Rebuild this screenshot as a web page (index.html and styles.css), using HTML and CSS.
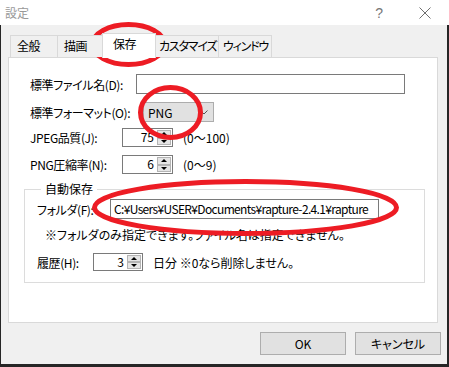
FILE: index.html
```html
<!DOCTYPE html>
<html lang="ja">
<head>
    <meta charset="UTF-8">
    <title>設定</title>
    <link rel="stylesheet" href="styles.css">
</head>
<body>

<div class="titlebar">
    <span class="title">設定</span>
    <span class="help">?</span>
    <svg class="close" width="12" height="12" viewBox="0 0 12 12">
        <path d="M0.5 0.5 L11.5 11.5 M11.5 0.5 L0.5 11.5" stroke="#6f6f6f" stroke-width="1" fill="none"/>
    </svg>
</div>

<div class="client">
    <div class="tabs">
        <div class="tab w1">全般</div>
        <div class="tab w2">描画</div>
        <div class="tab selected">保存</div>
        <div class="tab w4">カスタマイズ</div>
        <div class="tab w5">ウィンドウ</div>
    </div>

    <div class="panel">
        <div class="row r1">
            <label class="lbl l1">標準ファイル名(D):</label>
            <div class="textbox tb1"></div>
        </div>
        <div class="row r2">
            <label class="lbl l2">標準フォーマット(O):</label>
            <div class="combo">
                <span>PNG</span>
                <svg width="8" height="5" viewBox="0 0 8 5"><polyline points="0.5,0.5 4,4 7.5,0.5" fill="none" stroke="#555" stroke-width="1"/></svg>
            </div>
        </div>
        <div class="row r3">
            <label class="lbl l3">JPEG品質(J):</label>
            <div class="spin w51">
                <span class="val">75</span>
                <span class="btns"><span class="up"></span><span class="down"></span></span>
            </div>
            <span class="range">(0〜100)</span>
        </div>
        <div class="row r4">
            <label class="lbl l3">PNG圧縮率(N):</label>
            <div class="spin w51">
                <span class="val">6</span>
                <span class="btns"><span class="up"></span><span class="down"></span></span>
            </div>
            <span class="range">(0〜9)</span>
        </div>

        <fieldset class="group">
            <legend>自動保存</legend>
            <div class="row r5">
                <label class="lbl l5">フォルダ(F):</label>
                <div class="textbox tb2">C:¥Users¥USER¥Documents¥rapture-2.4.1¥rapture</div>
            </div>
            <div class="note">※フォルダのみ指定できます。ファイル名は指定できません。</div>
            <div class="row r7">
                <label class="lbl l7">履歴(H):</label>
                <div class="spin w50">
                    <span class="val">3</span>
                    <span class="btns"><span class="up"></span><span class="down"></span></span>
                </div>
                <span class="range">日分 ※0なら削除しません。</span>
            </div>
        </fieldset>
    </div>

    <div class="buttons">
        <button class="btn">OK</button>
        <button class="btn">キャンセル</button>
    </div>
</div>

<!-- red annotation marks drawn over the dialog -->
<svg class="marks" width="449" height="367" viewBox="0 0 449 367">
    <ellipse cx="128.5" cy="44.5" rx="36" ry="20" fill="none" stroke="#ed1c24" stroke-width="5"/>
    <ellipse cx="170.5" cy="112.5" rx="30" ry="25" fill="none" stroke="#ed1c24" stroke-width="5"/>
    <ellipse cx="245.5" cy="207.5" rx="151" ry="26" fill="none" stroke="#ed1c24" stroke-width="5"/>
</svg>

</body>
</html>
```

FILE: styles.css
```css
* {
    box-sizing: border-box;
}
body {
    margin: 0;
    width: 449px;
    height: 367px;
    overflow: hidden;
    position: relative;
    background: #262626;
    font-family: "Noto Sans CJK JP", "Noto Sans", sans-serif;
    font-size: 12px;
    font-feature-settings: "palt";
    color: #000;
}
.titlebar {
    height: 25px;
    background: #fff;
    display: flex;
    align-items: center;
    padding-left: 5px;
    color: #999;
}
.title {
    flex: 1;
}
.help {
    font-family: "Liberation Sans", sans-serif;
    font-size: 14px;
    color: #777;
    margin-right: 36px;
}
.close {
    margin-right: 18px;
}
.client {
    height: 339px;
    margin: 0 2px 0 1px;
    background: #f0f0f0;
    padding: 8px 0 0 7px;
}
.tabs {
    display: flex;
    align-items: flex-end;
    height: 24px;
    padding-left: 2px;
    position: relative;
    z-index: 1;
}
.tab {
    height: 22px;
    border: 1px solid #d9d9d9;
    border-bottom: none;
    margin-right: -1px;
    padding-left: 6px;
    line-height: 20px;
    background: #f0f0f0;
    white-space: nowrap;
    overflow: hidden;
    letter-spacing: -0.5px;
}
.w1 { width: 48px; }
.w2 { width: 48px; }
.w4 { width: 64px; padding-left: 3px; letter-spacing: -1.2px; }
.w5 { width: 54px; padding-left: 4px; letter-spacing: -1.2px; }
.tab.selected {
    width: 54px;
    height: 25px;
    margin-left: -2px;
    margin-bottom: -1px;
    padding-left: 10px;
    line-height: 20px;
    background: #fff;
    position: relative;
    z-index: 2;
}
.panel {
    width: 430px;
    height: 266px;
    border: 1px solid #d9d9d9;
    background: #fff;
    padding: 16px 0 0 21px;
}
.row {
    display: flex;
    align-items: center;
}
.lbl {
    flex: none;
    white-space: nowrap;
    letter-spacing: -0.4px;
}
.r1 { height: 20px; }
.r2 { height: 20px; margin-top: 8px; }
.r3 { height: 19px; margin-top: 6px; }
.r4 { height: 19px; margin-top: 8px; }
.l1 { width: 106px; }
.l2 { width: 113px; }
.l3 { width: 92px; }
.textbox {
    height: 100%;
    border: 1px solid #7a7a7a;
    background: #fff;
    padding-left: 3px;
    line-height: 17px;
    white-space: nowrap;
    overflow: hidden;
}
.tb1 { width: 269px; }
.tb2 {
    width: 269px;
    letter-spacing: -0.65px;
}
.combo {
    width: 71px;
    height: 100%;
    border: 1px solid #adadad;
    background: #e1e1e1;
    display: flex;
    align-items: center;
    justify-content: space-between;
    padding: 0 5px 0 4px;
}
.spin {
    height: 100%;
    display: flex;
    border: 1px solid #7a7a7a;
    background: #fff;
}
.w51 { width: 51px; }
.w50 { width: 50px; }
.val {
    flex: 1;
    text-align: right;
    padding-right: 2px;
    line-height: 16px;
}
.btns {
    width: 16px;
    display: flex;
    flex-direction: column;
    padding: 1px;
}
.btns span {
    flex: 1;
    background: #e5e5e5;
    border: 1px solid #b4b4b4;
    display: flex;
    align-items: center;
    justify-content: center;
}
.btns span::after {
    content: "";
    border-left: 3px solid transparent;
    border-right: 3px solid transparent;
}
.btns .up::after {
    border-bottom: 3px solid #000;
}
.btns .down::after {
    border-top: 3px solid #000;
}
.range {
    margin-left: 10px;
}
.group {
    width: 401px;
    margin: 7px 0 0 -6px;
    padding: 0 0 11px 12px;
    border: 1px solid #dcdcdc;
}
.group legend {
    height: 16px;
    line-height: 16px;
    margin-left: 4px;
    padding: 0 4px;
}
.r5 { height: 20px; margin-top: 2px; }
.l5 { width: 73px; }
.note {
    height: 16px;
    line-height: 16px;
    margin: 8px 0 0 8px;
}
.r7 { height: 18px; margin-top: 10px; }
.l7 { width: 56px; }
.buttons {
    display: flex;
    justify-content: flex-end;
    gap: 9px;
    margin-top: 9px;
    padding-right: 6px;
}
.btn {
    width: 86px;
    height: 23px;
    border: 1px solid #adadad;
    background: #e1e1e1;
    font-family: inherit;
    font-size: 12px;
    font-feature-settings: "palt";
    color: #000;
    padding: 0;
}
.marks {
    position: absolute;
    left: 0;
    top: 0;
    pointer-events: none;
}
```
